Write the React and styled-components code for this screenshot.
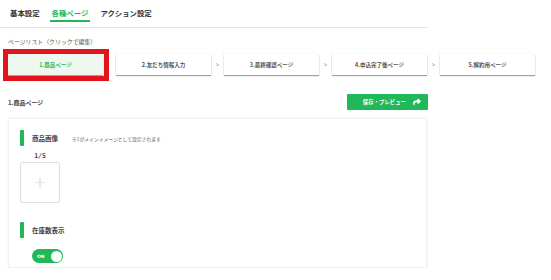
import React from 'react';
import styled, { createGlobalStyle } from 'styled-components';
import { FaShare } from 'react-icons/fa';

const green = '#21b85a';

const GlobalStyle = createGlobalStyle`
  body {
    margin: 0;
    background: #fff;
    font-family: "Noto Sans CJK JP", "Noto Sans", sans-serif;
    color: #333;
  }
`

const Main = styled.div`
  width: 428px;
`

const Tabs = styled.nav`
  display: flex;
  gap: 8px;
  padding: 0 8px 5px;
  border-bottom: 1px solid #e6e6e6;
`

const Tab = styled.div`
  padding: 8px 2px 2px;
  font-size: 7.4px;
  line-height: 10px;
  font-weight: 700;
  color: ${p => (p.active ? green : '#333')};
  border-bottom: 2px solid ${p => (p.active ? green : 'transparent')};
`

const Content = styled.div`
  padding: 0 0 0 8px;
`

const ListLabel = styled.div`
  margin-top: 9px;
  font-size: 5.9px;
  line-height: 10px;
  color: #555;
`

const CardRow = styled.div`
  display: flex;
  align-items: center;
  margin-top: 7px;
  width: 560px;
`

const CardWrap = styled.div`
  position: relative;
  flex-shrink: 0;
`

const Card = styled.div`
  width: 95px;
  height: 21px;
  display: flex;
  align-items: center;
  justify-content: center;
  background: ${p => (p.active ? '#eef8ef' : '#fff')};
  box-shadow: 0 1px 1px rgba(0, 0, 0, 0.35), 0 0 2px rgba(0, 0, 0, 0.08);
  font-size: 5.5px;
  font-weight: 700;
  color: ${p => (p.active ? green : '#555')};
`

const Highlight = styled.div`
  position: absolute;
  top: -5px;
  left: -5px;
  right: -6px;
  bottom: -6px;
  border: 5px solid #e3141c;
`

const Sep = styled.div`
  width: 13px;
  flex-shrink: 0;
  text-align: center;
  font-size: 6px;
  color: #888;
`

const HeadRow = styled.div`
  display: flex;
  align-items: center;
  justify-content: space-between;
  margin-top: 19px;
  height: 16px;
`

const PageTitle = styled.div`
  font-size: 6px;
  font-weight: 700;
  color: #444;
`

const SaveButton = styled.button`
  width: 81px;
  height: 16px;
  border: none;
  border-radius: 1px;
  background: ${green};
  color: #fff;
  display: flex;
  align-items: center;
  justify-content: flex-end;
  gap: 7px;
  padding: 0 7px 0 0;
  font-family: inherit;
  font-size: 5.4px;
  font-weight: 700;

  svg {
    width: 8px;
    height: 8px;
  }
`

const Panel = styled.div`
  margin-top: 8px;
  width: 419px;
  height: 150px;
  box-sizing: border-box;
  border: 1px solid #f0f0f0;
  box-shadow: 0 0 3px rgba(0, 0, 0, 0.06);
  padding: 11px 11px 0;
`

const SectionHead = styled.div`
  display: flex;
  align-items: center;
`

const Bar = styled.span`
  width: 4px;
  height: 16px;
  border-radius: 1px;
  background: ${green};
  margin-right: 8px;
`

const SectionTitle = styled.span`
  font-size: 6.5px;
  font-weight: 700;
  color: #444;
`

const Note = styled.span`
  margin-left: 14px;
  font-size: 4.8px;
  color: #555;
`

const Uploader = styled.div`
  width: 40px;
  margin-top: 6px;
  display: flex;
  flex-direction: column;
  align-items: center;
`

const Count = styled.div`
  font-family: "DejaVu Sans Mono", monospace;
  font-size: 6.5px;
  font-weight: 700;
  line-height: 9px;
  color: #444;
`

const UploadBox = styled.div`
  margin-top: 1px;
  width: 40px;
  height: 41px;
  box-sizing: border-box;
  border: 1px solid #e0e0e0;
  border-radius: 2px;
  display: flex;
  align-items: center;
  justify-content: center;
  color: #d0d0d0;
  font-size: 16px;
  font-weight: 300;
  font-family: "DejaVu Sans", sans-serif;
`

const Section = styled.div`
  margin-top: ${p => p.gap || 0}px;
`

const Toggle = styled.div`
  margin: 11px 0 0 12px;
  width: 31px;
  height: 14px;
  border-radius: 7px;
  background: ${green};
  display: flex;
  align-items: center;
  justify-content: space-between;
  padding: 0 1.5px 0 5px;
  box-sizing: border-box;
  color: #fff;
  font-family: "DejaVu Sans", sans-serif;
  font-size: 4.5px;
  font-weight: 700;

  &::after {
    content: '';
    width: 11px;
    height: 11px;
    border-radius: 50%;
    background: #fff;
  }
`

const pages = ['1.商品ページ', '2.友だち情報入力', '3.最終確認ページ', '4.申込完了後ページ', '5.解約用ページ']

export default function App() {
  return (
    <Main>
      <GlobalStyle />
      <Tabs>
        <Tab>基本設定</Tab>
        <Tab active>各種ページ</Tab>
        <Tab>アクション設定</Tab>
      </Tabs>
      <Content>
        <ListLabel>ページリスト（クリックで編集）</ListLabel>
        <CardRow>
          {pages.map((name, i) => (
            <React.Fragment key={name}>
              {i > 0 && <Sep>{i === 1 ? '' : '>'}</Sep>}
              <CardWrap>
                <Card active={i === 0}>{name}</Card>
                {i === 0 && <Highlight />}
              </CardWrap>
            </React.Fragment>
          ))}
        </CardRow>
        <HeadRow>
          <PageTitle>1.商品ページ</PageTitle>
          <SaveButton>
            保存・プレビュー
            <FaShare />
          </SaveButton>
        </HeadRow>
        <Panel>
          <SectionHead>
            <Bar />
            <SectionTitle>商品画像</SectionTitle>
            <Note>※1がメインイメージとして設定されます</Note>
          </SectionHead>
          <Uploader>
            <Count>1/5</Count>
            <UploadBox>+</UploadBox>
          </Uploader>
          <Section gap={19}>
            <SectionHead>
              <Bar />
              <SectionTitle>在庫数表示</SectionTitle>
            </SectionHead>
            <Toggle>ON</Toggle>
          </Section>
        </Panel>
      </Content>
    </Main>
  );
}
